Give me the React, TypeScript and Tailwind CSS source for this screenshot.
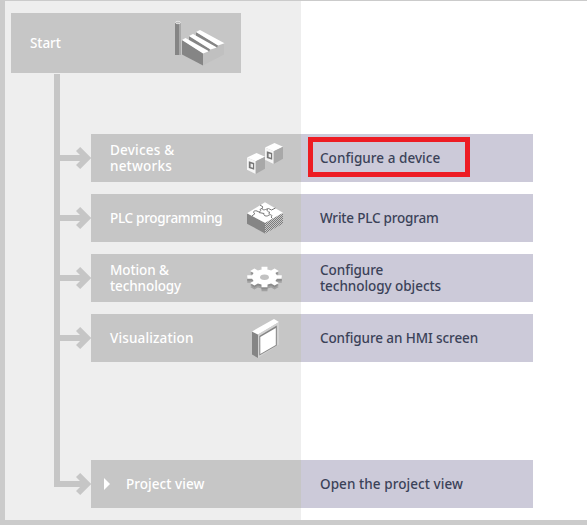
import type { ReactNode } from "react";

function FactoryIcon() {
  return (
    <svg width="56" height="50" viewBox="0 0 56 50">
      <path d="M3 5h4v32H3z" fill="#858585" />
      <path d="M7 5h2v32H7z" fill="#a9a9a9" />
      <ellipse cx="6" cy="4.5" rx="2.6" ry="1.2" fill="#bbb" stroke="#eee" strokeWidth=".8" />
      <path d="M10 22l21 13v12.5L10 36.5z" fill="#858585" />
      <path d="M31 35l6-2 1-2 7-1.5 1-2.5 6-2v11.5l-21 11z" fill="#c0c0c0" />
      <path d="M24 14v5l21 11 1-3z" fill="#858585" />
      <path d="M24 14l4-2 24.5 13.2-6.5 2.3z" fill="#fff" />
      <path d="M17 18v5l20 11 1-3z" fill="#858585" />
      <path d="M17 18l4-2 24 13.5-6.5 2z" fill="#fff" />
      <path d="M10 22l3.5-2L37 33.3l-6 2.2z" fill="#fff" />
    </svg>
  );
}

function Cube() {
  return (
    <>
      <path d="M0 4.5L9.5 0 18 3.8 8.7 8.3z" fill="#fff" />
      <path d="M0 4.5l8.7 3.8V21L0 16.7z" fill="#f6f6f6" />
      <path d="M8.7 8.3L18 3.8v12L8.7 21z" fill="#a8a8a8" />
      <path d="M1.8 8.3L7.2 10v6.8l-5.4-1.7z" fill="#777" />
      <path d="M3.6 10.5l2.4.8v3.5L3.6 14z" fill="#ececec" />
    </>
  );
}

function DevicesIcon() {
  return (
    <svg width="40" height="36" viewBox="0 0 40 36">
      <path d="M18 20l6-3.5" stroke="#eee" strokeWidth="1.5" />
      <g transform="translate(19 3)"><Cube /></g>
      <g transform="translate(1 13)"><Cube /></g>
    </svg>
  );
}

function ProgramIcon() {
  return (
    <svg width="40" height="36" viewBox="0 0 40 36">
      <defs>
        <pattern id="sheets" width="2" height="2" patternUnits="userSpaceOnUse">
          <path d="M0 0h2v2H0z" fill="#c8c8c8" />
          <path d="M0 0h1v1H0zM1 1h1v1H1z" fill="#7c7c7c" />
        </pattern>
      </defs>
      <path d="M1 13.3l18 9.4v10.8L1 23.7z" fill="#858585" />
      <path d="M19 22.7l18-10v11l-18 9.8z" fill="url(#sheets)" />
      <path d="M1 13.3l18-11 18 10.4-18 10z" fill="#fff" />
      <path
        d="M6 16l3-2.5c-3-1-1-3.5 2-2.5 2 2 5 0 3-1.5l2.5-1.5M14 5l3 2c-2 2 0 3.5 2.5 2.5l3-1 3 1.5 4-2M13 12.5l5 1c-1 2.5 3 3.5 5 1.5 2-1 4 .5 2 2l1.5 1.5M22 9c-2 1.5 0 3 1.5 3l-.5 2"
        fill="none"
        stroke="#777"
      />
    </svg>
  );
}

const TEETH = 8;

const gearPoints = Array.from({ length: TEETH }, (_, tooth) =>
  [
    [-0.24, 0.73],
    [-0.17, 1],
    [0.17, 1],
    [0.24, 0.73],
  ].map(([offset, radius]) => {
    const angle = (tooth * 2 * Math.PI) / TEETH + offset;
    return `${(18.5 + Math.cos(angle) * radius * 17.5).toFixed(2)},${(17 + Math.sin(angle) * radius * 10.5).toFixed(2)}`;
  }),
)
  .flat()
  .join(" ");

function GearIcon() {
  return (
    <svg width="40" height="36" viewBox="0 0 40 36">
      <polygon points={gearPoints} transform="translate(0 4)" fill="#a0a0a0" />
      <polygon points={gearPoints} transform="translate(0 2)" fill="#8c8c8c" />
      <polygon points={gearPoints} fill="#fff" />
      <ellipse cx="18.5" cy="17.2" rx="4.4" ry="2.7" fill="#c2c2c2" />
    </svg>
  );
}

function ScreenIcon() {
  return (
    <svg width="40" height="48" viewBox="0 0 40 48">
      <path d="M6 17.5l6 3V44l-6-3.5z" fill="#858585" />
      <path d="M6 17.5L28 5l5 3-21 12.5z" fill="#fff" />
      <path d="M12 20.5L33 8v22.5L12 44z" fill="#d2d2d2" />
      <path d="M13.3 22l17.5-10.5v20l-17.5 10z" fill="#858585" />
      <path d="M14.3 23l15.5-9v17l-15.5 9z" fill="#fff" />
    </svg>
  );
}

function Arrow() {
  return (
    <div className="flex w-[31px] shrink-0 items-center">
      <div className="h-1.5 w-4 bg-[#c6c6c6]" />
      <svg width="15" height="22" viewBox="0 0 15 22" className="shrink-0">
        <path d="M0 8h8v6H0z" fill="#c6c6c6" />
        <path d="M4.2 0l11 11-11 11L0 18l7-7-7-7z" fill="#c6c6c6" />
      </svg>
    </div>
  );
}

function Spacer({ height, line = true }: { height: string; line?: boolean }) {
  return (
    <div className={`w-[296px] bg-[#eee] pl-[49px] ${height}`}>
      {line && <div className="h-full w-1.5 bg-[#c6c6c6]" />}
    </div>
  );
}

type StepProps = {
  label: ReactNode;
  action: ReactNode;
  icon?: ReactNode;
  highlighted?: boolean;
  last?: boolean;
};

function Step({ label, action, icon, highlighted, last }: StepProps) {
  return (
    <div className="flex h-[60px]">
      <div className="flex w-[296px] bg-[#eee] pl-[49px]">
        <div className={`w-1.5 bg-[#c6c6c6] ${last ? "h-[33px]" : "h-full"}`} />
        <Arrow />
        <div className="my-1.5 flex flex-1 items-center bg-[#c6c6c6] pl-[19px] text-white">
          {last && (
            <svg width="6" height="12" viewBox="0 0 6 12" className="mr-4 -ml-1.5">
              <path d="M0 0l6 6-6 6z" fill="#fff" />
            </svg>
          )}
          <div className="flex-1">{label}</div>
          {icon && <div className="mr-[15px]">{icon}</div>}
        </div>
      </div>
      <div className="relative my-1.5 flex w-[232px] items-center bg-[#cccad9] pl-[19px] text-[#3b4258]">
        {action}
        {highlighted && (
          <div className="absolute top-[3px] left-[7px] h-10 w-[162px] border-5 border-[#ed1c24]" />
        )}
      </div>
    </div>
  );
}

export default function App() {
  return (
    <main className="h-[525px] w-[587px] overflow-hidden border-t border-b-5 border-l-5 border-[#cbcbcb] bg-white font-['Noto_Sans',sans-serif] text-[13.5px] leading-4 font-medium whitespace-nowrap">
      <div className="h-[73px] w-[296px] bg-[#eee] pt-3 pl-1.5">
        <div className="flex h-[60px] w-[230px] items-center justify-between bg-[#c6c6c6] pr-[13px] pl-[19px] text-white">
          <span className="tracking-[-0.1px]">Start</span>
          <FactoryIcon />
        </div>
      </div>
      <Spacer height="h-[54px]" />
      <Step
        label={<span className="tracking-[0.2px]">Devices &amp;<br />networks</span>}
        action={<span className="tracking-[0.04px]">Configure a device</span>}
        icon={<DevicesIcon />}
        highlighted
      />
      <Step
        label={<span className="tracking-[-0.3px]">PLC programming</span>}
        action={<span className="tracking-[-0.2px]">Write PLC program</span>}
        icon={<ProgramIcon />}
      />
      <Step
        label={<span className="tracking-[-0.1px]">Motion &amp;<br />technology</span>}
        action={<span className="tracking-[-0.05px]">Configure<br />technology objects</span>}
        icon={<GearIcon />}
      />
      <Step
        label={<span className="tracking-[0.15px]">Visualization</span>}
        action={<span className="tracking-[-0.1px]">Configure an HMI screen</span>}
        icon={<ScreenIcon />}
      />
      <Spacer height="h-[86px]" />
      <Step
        label={<span className="tracking-[0.05px]">Project view</span>}
        action={<span className="tracking-[0.07px]">Open the project view</span>}
        last
      />
      <Spacer height="h-1.5" line={false} />
    </main>
  );
}
